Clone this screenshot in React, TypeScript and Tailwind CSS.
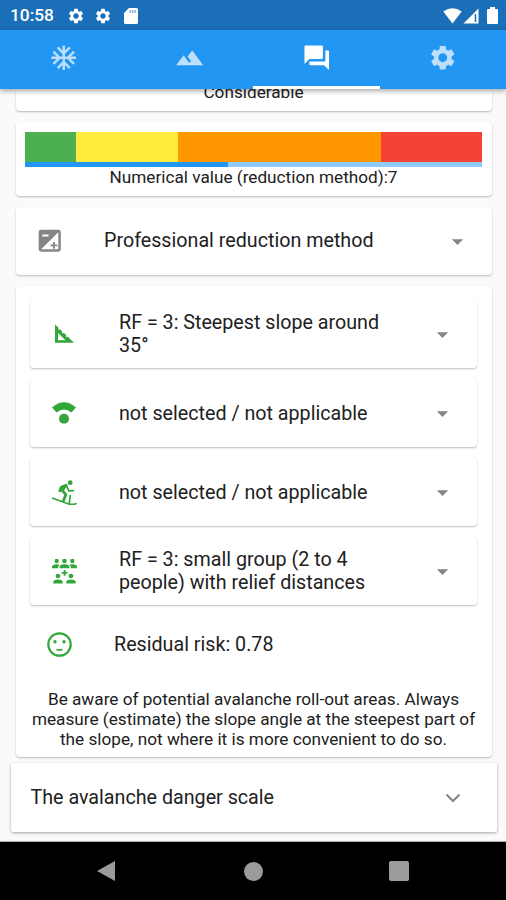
import type { ReactNode } from "react";
import { MdAcUnit, MdArrowDropDown, MdForum, MdSettings, MdTerrain } from "react-icons/md";

const CARD = "rounded-[4px] bg-white shadow-[0_1px_2px_rgba(0,0,0,0.26)]";

function SdIcon() {
  return (
    <svg viewBox="0 0 14 16" className="h-4 w-3.5" fill="white">
      <path d="M5 0h7.5A1.5 1.5 0 0 1 14 1.500v13a1.500 1.500 0 0 1-1.500 1.500h-11A1.500 1.500 0 0 1 0 14.500V5z" />
      <path d="M5.500 2h1.300v3H5.500zM8 2h1.300v3H8zM10.500 2h1.300v3h-1.300z" fill="#1b6fb8" opacity=".6" />
    </svg>
  );
}

function StatusBar() {
  return (
    <div className="flex h-[30px] items-center bg-[#1b6fb8] pt-px text-white">
      <span className="ml-[10px] w-[57px] text-[17.3px] font-medium">10:58</span>
      <MdSettings className="size-[18px]" />
      <MdSettings className="ml-[9px] size-[18px]" />
      <div className="ml-3"><SdIcon /></div>
      <div className="ml-auto mr-[8px] flex items-center">
        <svg viewBox="0 0 19 16" className="h-4 w-[19px]" fill="white">
          <path d="M.3 3.600Q9.500-3 18.700 3.600L9.500 15.500z" />
        </svg>
        <svg viewBox="0 0 16 16" className="ml-[1px] h-4 w-4">
          <path d="M15.500.5v15H.5z" fill="white" />
          <path d="M12.500 6v8" stroke="#1b6fb8" strokeWidth="1.500" />
        </svg>
        <svg viewBox="0 0 11 17" className="ml-[8px] h-[17px] w-[11px]" fill="white">
          <path d="M3 0h5v2h2a1 1 0 0 1 1 1v13a1 1 0 0 1-1 1H1a1 1 0 0 1-1-1V3a1 1 0 0 1 1-1h2z" />
        </svg>
      </div>
    </div>
  );
}

function Tabs() {
  return (
    <div className="relative z-10 grid h-[59px] grid-cols-4 bg-[#2196f3] text-white shadow-[0_2px_5px_rgba(0,0,0,0.35)]">
      <div className="flex items-center justify-center pb-[3px]"><MdAcUnit className="size-[29.500px] opacity-70" /></div>
      <div className="flex items-center justify-center pb-[3px]"><MdTerrain className="size-[29.500px] opacity-70" /></div>
      <div className="flex items-center justify-center border-b-[3px] border-white"><MdForum className="size-[29.500px]" /></div>
      <div className="flex items-center justify-center pb-[3px]"><MdSettings className="size-[29.500px] opacity-70" /></div>
    </div>
  );
}

function ExposureIcon() {
  return (
    <svg viewBox="0 0 24 24" className="size-[29.500px]" fill="#858585">
      <path fillRule="evenodd" d="M5 3h14a2 2 0 0 1 2 2v14a2 2 0 0 1-2 2H5a2 2 0 0 1-2-2V5a2 2 0 0 1 2-2zM19 5v14H5zM6 7h5v1.500H6z" />
      <path d="M14.700 13h1.500v2h2v1.500h-2v2h-1.500v-2h-2V15h2z" />
    </svg>
  );
}

function SlopeIcon() {
  return (
    <svg viewBox="0 0 24 24" className="size-6" fill="#34a63c">
      <path fillRule="evenodd" d="M3 2.500l3.800 3.600-.8.900 1.100 1 .8-.8 2.700 2.500-.8.900 1.100 1 .8-.8 2.700 2.500-.8.900 1.100 1 .8-.8 6.500 6.300H3zM6 11v7.300h7.500z" />
    </svg>
  );
}

function BeaconIcon() {
  return (
    <svg viewBox="0 0 24 24" className="size-6" fill="#34a63c">
      <path d="M0 6.500Q12-4 24 6.500L19.500 11.500Q12 5.500 4.500 11.500z" />
      <circle cx="12" cy="17.700" r="5" />
    </svg>
  );
}

function SkiIcon() {
  return (
    <svg viewBox="0 0 24 24" className="size-[25px]" fill="none" stroke="#34a63c" strokeLinecap="round" strokeLinejoin="round">
      <circle cx="17.500" cy="2.600" r="2.300" fill="#34a63c" stroke="none" />
      <path d="M13.500 5L8.800 7 7.500 10.500" strokeWidth="2.600" />
      <path d="M13.500 5.500L9.800 10l3.500 4-2.300 6" strokeWidth="2.700" />
      <path d="M14.500 6.500l1.700 4 4.300-.3M17.500 15l-.8 7" strokeWidth="1.600" />
      <path d="M.8 17.500L16 23q3 1 7-.2" strokeWidth="1.700" />
    </svg>
  );
}

function GroupIcon() {
  return (
    <svg viewBox="0 0 25 26" className="h-[26px] w-[25px]" fill="#34a63c">
      <circle cx="4.700" cy="3" r="2.200" /><circle cx="12.500" cy="3" r="2.300" /><circle cx="20.300" cy="3" r="2.200" />
      <path d="M0 10.300V9q0-2.800 4.700-2.800 1.800 0 3 .6-1.800 1.200-1.800 3.500zM7.500 10.300V9.200q0-3 5-3t5 3v1.100zM19.100 10.300q0-2.300-1.800-3.500 1.200-.6 3-.6 4.700 0 4.700 2.800v1.300z" />
      <path d="M11.700 12h1.800v2h2v1.700h-2v2h-1.800v-2h-2V14h2z" />
      <circle cx="6" cy="18" r="2.300" /><circle cx="19" cy="18" r="2.300" />
      <path d="M1.300 25.400v-1.300q0-2.600 4.700-2.600t4.700 2.600v1.300zM14.300 25.400v-1.300q0-2.600 4.700-2.600t4.700 2.600v1.300z" />
    </svg>
  );
}

function FaceIcon() {
  return (
    <svg viewBox="0 0 25 25" className="size-[25px]" fill="#34a63c">
      <circle cx="12.500" cy="12.500" r="11.200" fill="none" stroke="#34a63c" strokeWidth="2.200" />
      <circle cx="8" cy="9.700" r="1.700" /><circle cx="17" cy="9.700" r="1.700" />
      <path d="M9.500 17.500q3 1 6 0" fill="none" stroke="#34a63c" strokeWidth="1.700" />
    </svg>
  );
}

function FactorCard({ icon, children }: { icon: ReactNode; children: ReactNode }) {
  return (
    <div className={`${CARD} flex h-[68px] items-center`}>
      <div className="ml-[19px] flex w-[30px] justify-center">{icon}</div>
      <div className="ml-[40px] w-[290px] whitespace-nowrap text-[19.700px] leading-[23px]">{children}</div>
      <MdArrowDropDown className="ml-auto mr-[21px] size-[27px] text-[#858585]" />
    </div>
  );
}

export default function App() {
  return (
    <div className="flex h-[900px] w-[506px] flex-col overflow-hidden bg-[#fafafa] font-['Roboto',sans-serif] text-[#212121]">
      <StatusBar />
      <Tabs />
      <main className="flex h-[753px] flex-col overflow-hidden border-b border-[#aaa] pl-[15.500px] pr-[14.500px]">
        <section className={`${CARD} h-[22px] shrink-0 text-center text-[17.200px] leading-[20px]`}>
          <div className="-mt-[7px]">Considerable</div>
        </section>
        <section className={`${CARD} mt-[11px] h-[74px] shrink-0 px-[9.500px] pt-[10px]`}>
          <div className="flex h-[30px]">
            <div className="w-[51px] bg-[#4caf50]" />
            <div className="w-[102px] bg-[#ffeb3b]" />
            <div className="w-[203px] bg-[#ff9800]" />
            <div className="flex-1 bg-[#f44336]" />
          </div>
          <div className="h-[5px] bg-[#90caf9]"><div className="h-full w-[203px] bg-[#2196f3]" /></div>
          <div className="text-center text-[17.200px] leading-[20px]">Numerical value (reduction method):7</div>
        </section>
        <section className={`${CARD} mt-[11px] flex h-[68px] shrink-0 items-center`}>
          <div className="ml-[19px]"><ExposureIcon /></div>
          <div className="ml-[40px] whitespace-nowrap text-[19.700px]">Professional reduction method</div>
          <MdArrowDropDown className="ml-auto mr-[21px] size-[27px] text-[#858585]" />
        </section>
        <section className={`${CARD} mt-[11px] h-[471px] shrink-0 px-[14.500px] pt-[14px]`}>
          <div className="flex flex-col gap-[11px]">
            <FactorCard icon={<SlopeIcon />}>RF = 3: Steepest slope around<br />35°</FactorCard>
            <FactorCard icon={<BeaconIcon />}>not selected / not applicable</FactorCard>
            <FactorCard icon={<SkiIcon />}>not selected / not applicable</FactorCard>
            <FactorCard icon={<GroupIcon />}>RF = 3: small group (2 to 4<br />people) with relief distances</FactorCard>
          </div>
          <div className="flex h-[79px] items-center">
            <div className="ml-[17px]"><FaceIcon /></div>
            <div className="ml-[42px] text-[19.700px]">Residual risk: 0.78</div>
          </div>
          <p className="mt-[5px] whitespace-nowrap text-center text-[17.200px] leading-[20px]">
            Be aware of potential avalanche roll-out areas. Always<br />
            measure (estimate) the slope angle at the steepest part of<br />
            the slope, not where it is more convenient to do so.
          </p>
        </section>
        <section className="-mx-[5px] mt-[6px] flex h-[69px] shrink-0 items-center rounded-[2px] bg-white shadow-[0_1px_3px_rgba(0,0,0,0.35)]">
          <div className="ml-[20px] text-[19.700px]">The avalanche danger scale</div>
          <svg viewBox="0 0 16 10" className="ml-auto mr-[36px] h-[10px] w-4"><path d="M1.500 1.500L8 8l6.500-6.500" fill="none" stroke="#858585" strokeWidth="2" /></svg>
        </section>
      </main>
      <nav className="flex h-[58px] items-center bg-black">
        <svg viewBox="0 0 18 20" className="ml-[97px] h-5 w-[18px]" fill="#9b9b9b"><path d="M18 0v20L0 10z" /></svg>
        <div className="ml-[129px] size-[19px] rounded-full bg-[#9b9b9b]" />
        <div className="ml-[126px] size-[20px] rounded-[2px] bg-[#9b9b9b]" />
      </nav>
    </div>
  );
}
